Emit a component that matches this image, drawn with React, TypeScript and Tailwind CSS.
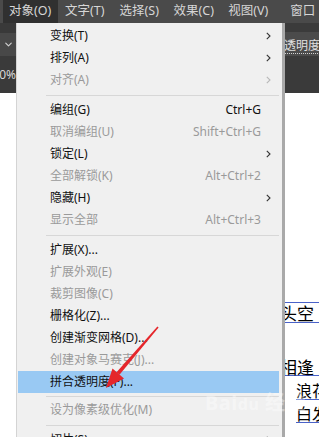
import { ChevronDown } from 'lucide-react';

type Item =
  | { label: string; shortcut?: string; sub?: boolean; disabled?: boolean; active?: boolean }
  | 'sep';

const items: Item[] = [
  { label: '变换(T)', sub: true },
  { label: '排列(A)', sub: true },
  { label: '对齐(A)', sub: true, disabled: true },
  'sep',
  { label: '编组(G)', shortcut: 'Ctrl+G' },
  { label: '取消编组(U)', shortcut: 'Shift+Ctrl+G', disabled: true },
  { label: '锁定(L)', sub: true },
  { label: '全部解锁(K)', shortcut: 'Alt+Ctrl+2', disabled: true },
  { label: '隐藏(H)', sub: true },
  { label: '显示全部', shortcut: 'Alt+Ctrl+3', disabled: true },
  'sep',
  { label: '扩展(X)...' },
  { label: '扩展外观(E)', disabled: true },
  { label: '裁剪图像(C)', disabled: true },
  { label: '栅格化(Z)...' },
  { label: '创建渐变网格(D)...' },
  { label: '创建对象马赛克(J)...', disabled: true },
  { label: '拼合透明度(F)...', active: true },
  'sep',
  { label: '设为像素级优化(M)', disabled: true },
  'sep',
  { label: '切片(S)', sub: true },
];

const menuBar = ['对象(O)', '文字(T)', '选择(S)', '效果(C)', '视图(V)', '窗口'];

const font = { fontFamily: '"Noto Sans", "Noto Sans CJK SC", sans-serif' };
const docFont = { fontFamily: '"Noto Sans CJK SC", sans-serif' };

function SubArrow({ disabled }: { disabled?: boolean }) {
  return (
    <svg width="5" height="8" viewBox="0 0 5 8" className="ml-[5px]">
      <path d="M0.8 0.8 L4 4 L0.8 7.2" fill="none" stroke={disabled ? '#b8b8b8' : '#333'} strokeWidth="1.1" />
    </svg>
  );
}

export default function App() {
  return (
    <div className="relative w-[319px] h-[437px] overflow-hidden bg-white text-[12px]" style={font}>
      {/* top menu bar */}
      <div className="flex h-[23px] bg-[#4a4a4a] text-[#d6d6d6] text-[12.5px] whitespace-nowrap">
        <div className="w-[15px] flex justify-end items-center overflow-hidden pr-[3px]">E)</div>
        {menuBar.map((m, i) => (
          <div
            key={m}
            className={`w-[54.5px] shrink-0 flex items-center justify-center ${i === 0 ? 'bg-[#303030]' : ''}`}
          >
            {m}
          </div>
        ))}
      </div>

      <div className="flex">
        {/* left toolbar strip */}
        <div className="w-[16px] shrink-0">
          <div className="h-[10px] bg-[#393939]" />
          <div className="h-[23px] bg-[#484848] flex items-center justify-center">
            <ChevronDown size={11} strokeWidth={2.5} className="text-[#d0d0d0]" />
          </div>
          <div className="h-[37px] bg-[#3a3a3a] flex items-center justify-end overflow-hidden text-[#d8d8d8] text-[12px]">
            00%
          </div>
        </div>

        {/* dropdown menu */}
        <div className="w-[269px] shrink-0 h-[414px] bg-[#f0f0f0] border-l border-[#d4d4d4] border-r-[3px] border-r-[#a9a9a9] pt-[2px]">
          {items.map((it, i) =>
            it === 'sep' ? (
              <div key={i} className={`flex items-center ${i === 18 ? 'h-[6px]' : 'h-[8px]'}`}>
                <div className="ml-[29px] mr-[3px] flex-1 h-px bg-[#d7d7d7]" />
              </div>
            ) : (
              <div
                key={i}
                className={`flex items-center h-[22px] ml-[1px] mr-[3px] pl-[32px] whitespace-nowrap ${
                  it.active ? 'bg-[#99c9f3]' : ''
                } ${it.disabled ? 'text-[#9a9a9a]' : 'text-[#111]'}`}
              >
                <span>{it.label}</span>
                <span className="ml-auto">{it.shortcut}</span>
                <div className="w-[18px] flex items-center">{it.sub && <SubArrow disabled={it.disabled} />}</div>
              </div>
            )
          )}
        </div>

        {/* right side: toolbar + document */}
        <div className="flex-1 overflow-hidden">
          <div className="h-[9px] bg-[#3b3b3b]" />
          <div className="h-[24px] bg-[#4b4b4b] flex items-end pb-[2px] text-[#e0e0e0] text-[12px] whitespace-nowrap">
            <span className="border-b border-dotted border-[#d0d0d0] leading-[14px] -ml-[1px]">透明度</span>
          </div>
          <div className="h-[37px] bg-[#3a3a3a]" />

          <div className="h-[209px]" />
          <div className="border-t border-[#4a62c8]" />
          <div className="text-[17px] leading-[19px] text-black whitespace-nowrap -ml-[5px] h-[20px] border-b border-[#4a62c8]" style={docFont}>
            头空
          </div>
          <div className="mt-[35px] text-[17px] leading-[17px] text-black whitespace-nowrap -ml-[5px] h-[18px] border-b border-[#4a62c8]" style={docFont}>
            相逢
          </div>
          <div className="mt-[6px] text-[16px] leading-[16px] text-black whitespace-nowrap ml-[11px] h-[18px] border-b border-[#4a62c8]" style={docFont}>
            浪花
          </div>
          <div className="mt-[5px] text-[16px] leading-[16px] text-black whitespace-nowrap ml-[11px] h-[18px] border-b border-[#4a62c8]" style={docFont}>
            白发
          </div>
        </div>
      </div>

      {/* watermark */}
      <div className="absolute left-[205px] top-[388px] text-[20px] font-bold text-white/40 tracking-wide pointer-events-none whitespace-nowrap">
        Bai<span className="text-[16px]">du</span> 经验
      </div>

      {/* red arrow annotation */}
      <svg className="absolute left-0 top-0 pointer-events-none" width="319" height="437" viewBox="0 0 319 437">
        <polygon points="158.6,327.5 157.4,326.5 116.5,372.2 119.5,374.8" fill="#e5262b" />
        <polygon points="106,388 124,378.5 112.5,368.5" fill="#e5262b" />
      </svg>
    </div>
  );
}
